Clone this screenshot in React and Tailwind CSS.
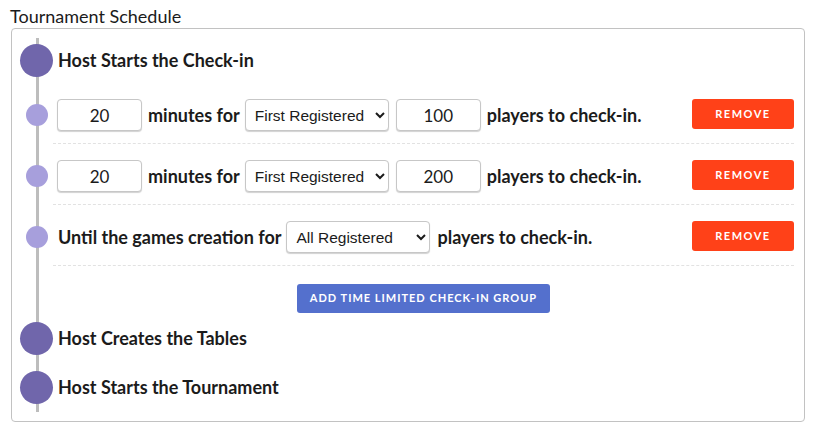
import React from 'react';

function Step({ title, className = '' }) {
  return (
    <div className={`relative flex items-center h-[33px] ${className}`}>
      <div className="w-[33px] h-[33px] rounded-full bg-[#7066ab] shrink-0" />
      <div className="ml-[5px] font-bold text-[18px]">{title}</div>
    </div>
  );
}

function NumInput({ value }) {
  return (
    <input
      defaultValue={value}
      className="w-[85px] h-8 bg-white border border-[#c7c7c7] rounded text-center text-[17px] shadow-[0_1px_1px_rgba(0,0,0,0.18)] outline-none"
    />
  );
}

function Picker({ value, options }) {
  return (
    <select
      defaultValue={value}
      className="w-[144px] h-8 bg-white border border-[#c7c7c7] rounded pl-[5px] pr-1 text-[15.5px] font-['Liberation_Sans',Arial,sans-serif] shadow-[0_1px_1px_rgba(0,0,0,0.18)] outline-none"
    >
      {options.map((o) => (
        <option key={o}>{o}</option>
      ))}
    </select>
  );
}

function RemoveBtn() {
  return (
    <button className="ml-auto -mt-[2px] w-[102px] h-[30px] rounded-[3px] bg-[#ff4118] text-white text-[11px] font-bold tracking-[1.5px]">
      REMOVE
    </button>
  );
}

function Row({ children }) {
  return (
    <div className="relative flex">
      <div className="w-[33px] shrink-0 pt-4 flex justify-center">
        <div className="h-8 flex items-center">
          <div className="w-[22px] h-[22px] rounded-full bg-[#a79fdc]" />
        </div>
      </div>
      <div className="flex-1 flex items-center pt-4 pb-3 border-b border-dashed border-[#e2e2e2] pl-1">
        {children}
      </div>
    </div>
  );
}

const opts = ['First Registered', 'Last Registered', 'All Registered'];

export default function App() {
  return (
    <div className="min-h-screen bg-white text-[#1b1b1b] font-['Lato',sans-serif]">
      <div className="pl-[10px] pt-1 text-[18px] leading-6">Tournament Schedule</div>
      <div className="ml-[11px] w-[794px] border border-[#c2c2c2] rounded pt-[9px] pb-[9px] pl-2 pr-[10px]">
        <div className="relative pt-[6px] pb-[8px]">
          <div className="absolute left-[16px] top-0 bottom-0 w-[3px] bg-[#bdbdbd]" />
          <Step title="Host Starts the Check-in" />
          <div className="mt-[6px]">
            <Row>
              <NumInput value="20" />
              <span className="ml-[6px] mr-[5px] font-bold text-[18px]">minutes for</span>
              <Picker value="First Registered" options={opts} />
              <span className="w-[7px]" />
              <NumInput value="100" />
              <span className="ml-[6px] font-bold text-[18px]">players to check-in.</span>
              <RemoveBtn />
            </Row>
            <Row>
              <NumInput value="20" />
              <span className="ml-[6px] mr-[5px] font-bold text-[18px]">minutes for</span>
              <Picker value="First Registered" options={opts} />
              <span className="w-[7px]" />
              <NumInput value="200" />
              <span className="ml-[6px] font-bold text-[18px]">players to check-in.</span>
              <RemoveBtn />
            </Row>
            <Row>
              <span className="ml-[1px] mr-[5px] font-bold text-[18px]">Until the games creation for</span>
              <Picker value="All Registered" options={opts} />
              <span className="ml-[7px] font-bold text-[18px]">players to check-in.</span>
              <RemoveBtn />
            </Row>
          </div>
          <div className="flex justify-center pl-[33px] mt-[18px]">
            <button className="w-[253px] h-[29px] rounded-[3px] bg-[#5470cd] text-white text-[11px] font-bold tracking-[1px]">
              ADD TIME LIMITED CHECK-IN GROUP
            </button>
          </div>
          <Step title="Host Creates the Tables" className="mt-[9px]" />
          <Step title="Host Starts the Tournament" className="mt-4" />
        </div>
      </div>
    </div>
  );
}
